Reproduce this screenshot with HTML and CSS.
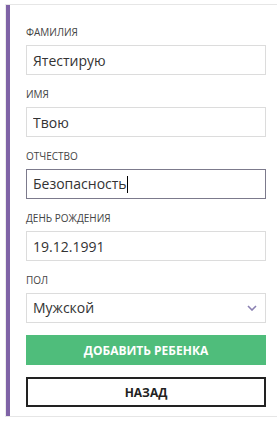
FILE: index.html
```html
<!DOCTYPE html>
<html lang="ru">
<head>
    <meta charset="UTF-8">
    <meta name="viewport" content="width=device-width, initial-scale=1.0">
    <title>Добавить ребенка</title>
    <link rel="stylesheet" href="styles.css">
</head>
<body>
    <div class="card">
        <form class="child-form">
            <div class="field">
                <label for="lastName">Фамилия</label>
                <input type="text" id="lastName" value="Ятестирую">
            </div>
            <div class="field">
                <label for="firstName">Имя</label>
                <input type="text" id="firstName" value="Твою">
            </div>
            <div class="field">
                <label for="middleName">Отчество</label>
                <div class="input focused">Безопасность<span class="caret"></span></div>
            </div>
            <div class="field">
                <label for="birthDate">День рождения</label>
                <input type="text" id="birthDate" value="19.12.1991">
            </div>
            <div class="field">
                <label for="gender">Пол</label>
                <div class="select">
                    <span>Мужской</span>
                    <svg width="10" height="6" viewBox="0 0 10 6"><path d="M1 1l4 4 4-4" fill="none" stroke="#8a80b2" stroke-width="1.6"/></svg>
                </div>
            </div>
            <div class="actions">
                <button type="button" class="btn btn-green">Добавить ребенка</button>
                <button type="button" class="btn btn-outline">Назад</button>
            </div>
        </form>
    </div>
</body>
</html>
```

FILE: styles.css
```css
body {
    margin: 0;
    padding: 4px 0 0 5px;
    font-family: "Open Sans", Arial, sans-serif;
    background: #fff;
}
.card {
    border-top: 1px solid #e6e6e6;
    border-bottom: 1px solid #e6e6e6;
    border-left: 1px solid #ececec;
    height: 413px;
    box-sizing: border-box;
}
.child-form {
    border-left: 4px solid #7f63a6;
    height: 100%;
    box-sizing: border-box;
    padding: 21px 11px 0 16px;
}
.field {
    margin-bottom: 13px;
}
.field label {
    display: block;
    font-size: 10px;
    line-height: 12px;
    text-transform: uppercase;
    color: #444;
    margin-bottom: 7px;
}
.field input,
.input,
.select {
    display: block;
    width: 100%;
    height: 30px;
    box-sizing: border-box;
    border: 1px solid #dcdcdc;
    padding: 0 6px;
    font-family: "Open Sans", Arial, sans-serif;
    font-size: 14px;
    color: #333;
    line-height: 28px;
    outline: none;
}
.input.focused {
    border-color: #7c7a8c;
}
.caret {
    display: inline-block;
    width: 1px;
    height: 17px;
    background: #000;
    vertical-align: -4px;
}
.select {
    display: flex;
    justify-content: space-between;
    align-items: center;
    padding-right: 8px;
}
.actions {
    display: flex;
    flex-direction: column;
    gap: 12px;
    margin-top: -1px;
}
.btn {
    display: block;
    width: 100%;
    height: 30px;
    box-sizing: border-box;
    font-family: "Open Sans", Arial, sans-serif;
    font-size: 12px;
    font-weight: bold;
    text-transform: uppercase;
    cursor: pointer;
    border-radius: 0;
}
.btn-green {
    background-color: #4fbd7b;
    color: #fff;
    border: none;
}
.btn-outline {
    background: #fff;
    color: #222;
    border: 2px solid #222;
}
```
